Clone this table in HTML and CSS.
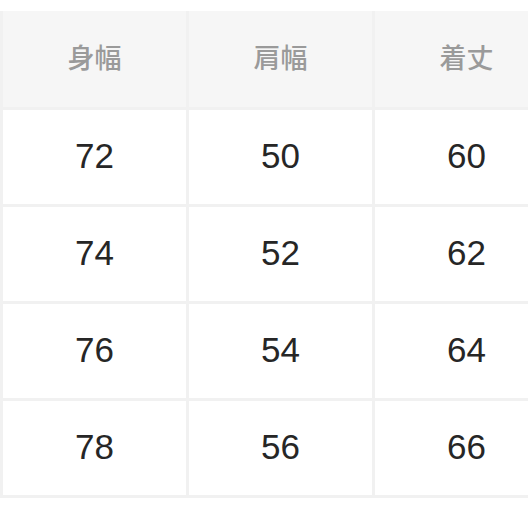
FILE: index.html
```html
<!DOCTYPE html>
<html lang="ja">
<head>
<meta charset="utf-8">
<title>サイズ表</title>
<link rel="stylesheet" href="styles.css">
</head>
<body>
<div class="frame">
  <div class="size-table">
    <div class="cell head">身幅</div>
    <div class="cell head">肩幅</div>
    <div class="cell head">着丈</div>
    <div class="cell">72</div>
    <div class="cell">50</div>
    <div class="cell">60</div>
    <div class="cell">74</div>
    <div class="cell">52</div>
    <div class="cell">62</div>
    <div class="cell">76</div>
    <div class="cell">54</div>
    <div class="cell">64</div>
    <div class="cell">78</div>
    <div class="cell">56</div>
    <div class="cell">66</div>
  </div>
</div>
</body>
</html>
```

FILE: styles.css
```css
html, body {
  margin: 0;
  padding: 0;
  background: #ffffff;
}

.frame {
  width: 100%;
  overflow: hidden;
  padding-top: 11px;
}

.size-table {
  width: 561px;
  box-sizing: border-box;
  display: grid;
  grid-template-columns: repeat(3, 183px);
  grid-template-rows: 96px repeat(4, 94px);
  column-gap: 3px;
  row-gap: 3px;
  padding: 0 3px 3px 3px;
  background: #f1f1f1;
}

.cell {
  display: flex;
  align-items: center;
  justify-content: center;
  padding-bottom: 3px;
  background: #ffffff;
  color: #262626;
  font-family: "Liberation Sans", Arial, sans-serif;
  font-size: 35px;
}

.head {
  padding-bottom: 5px;
  background: #f6f6f6;
  color: #9a9a9a;
  font-family: "Noto Sans CJK JP", "Noto Sans", sans-serif;
  font-size: 27px;
  font-weight: 500;
}
```
